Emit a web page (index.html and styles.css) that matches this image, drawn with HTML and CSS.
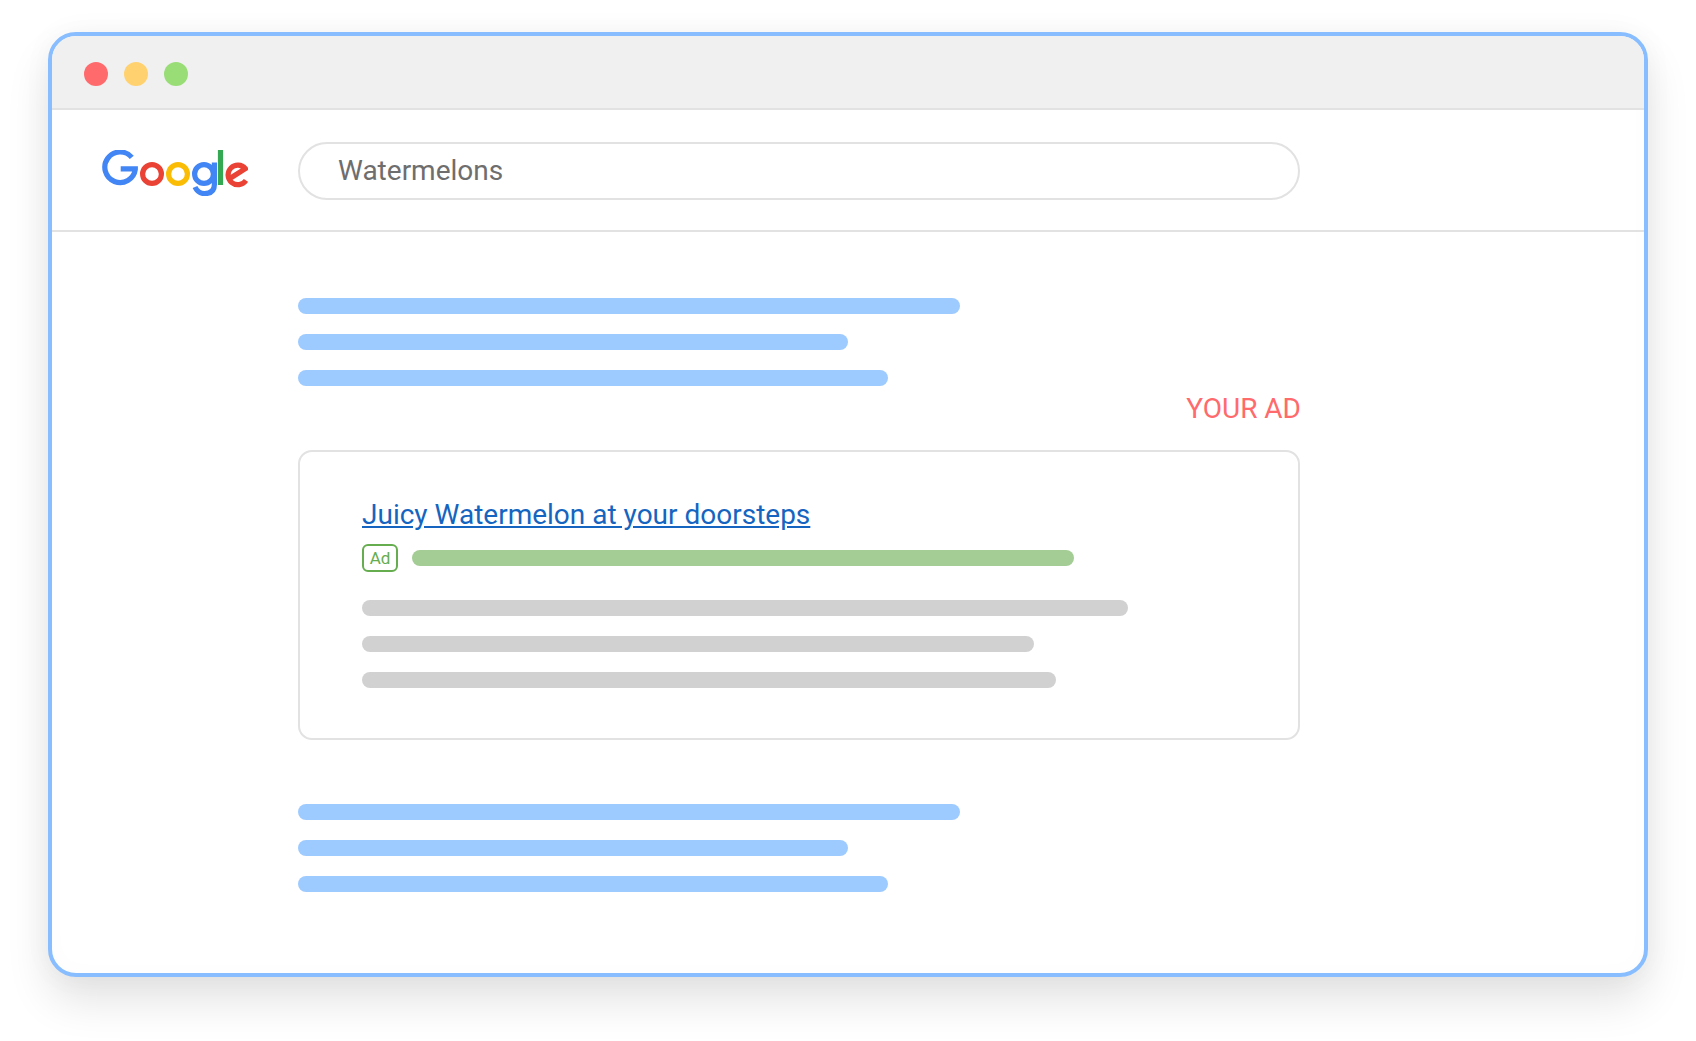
FILE: index.html
```html
<!DOCTYPE html>
<html lang="en">
<head>
<meta charset="utf-8">
<title>Google ad preview</title>
<link rel="stylesheet" href="styles.css">
</head>
<body>
<div class="window">
  <div class="titlebar">
    <span class="dot dot-red"></span>
    <span class="dot dot-yellow"></span>
    <span class="dot dot-green"></span>
  </div>
  <header class="header">
    <svg class="logo" viewBox="0 0 146 46" width="146" height="46" role="img" aria-label="Google">
      <g fill="none" stroke-width="5.2">
        <path stroke="#4285f4" d="M29.8 7.4A15.3 15.3 0 1 0 33.3 19.4V18.9H18.7"/>
        <circle stroke="#ea4335" cx="50" cy="24" r="9.4"/>
        <circle stroke="#fbbc05" cx="76" cy="24" r="9.4"/>
        <circle stroke="#4285f4" cx="102" cy="24" r="9.4"/>
        <path stroke="#4285f4" d="M112.4 12.5V34.5C112.4 41.5 108 43.6 102.6 43.6C98 43.6 94.8 41 93 37"/>
        <path stroke="#34a853" d="M118.5 0V35"/>
        <path stroke="#ea4335" d="M144 30.4A9.8 9.8 0 1 1 143.4 18.6L129 27.8"/>
      </g>
    </svg>
    <div class="search">Watermelons</div>
  </header>
  <main class="results">
    <div class="bars">
      <div class="bar bar-blue bar-w1"></div>
      <div class="bar bar-blue bar-w2"></div>
      <div class="bar bar-blue bar-w3"></div>
    </div>
    <div class="ad-label">YOUR AD</div>
    <section class="ad-card">
      <a class="ad-title" href="#">Juicy Watermelon at your doorsteps</a>
      <div class="ad-url">
        <span class="ad-badge">Ad</span>
        <div class="bar bar-green"></div>
      </div>
      <div class="bars">
        <div class="bar bar-gray bar-g1"></div>
        <div class="bar bar-gray bar-g2"></div>
        <div class="bar bar-gray bar-g3"></div>
      </div>
    </section>
    <div class="bars bars-lower">
      <div class="bar bar-blue bar-w1"></div>
      <div class="bar bar-blue bar-w2"></div>
      <div class="bar bar-blue bar-w3"></div>
    </div>
  </main>
</div>
</body>
</html>
```
FILE: styles.css
```css
* { box-sizing: border-box; }
html, body { margin: 0; height: 100%; background: #fff; }
body {
  padding: 32px 48px 64px;
  font-family: Roboto, "Liberation Sans", sans-serif;
  overflow: hidden;
}
.window {
  width: 1600px;
  height: 945px;
  background: #fff;
  border: 4px solid #88bdff;
  border-radius: 28px;
  box-shadow: 0 24px 44px rgba(0, 0, 0, 0.11), 0 0 30px rgba(0, 0, 0, 0.04), inset 0 0 24px rgba(0, 0, 0, 0.015);
  overflow: hidden;
}
.titlebar {
  height: 74px;
  padding: 26px 0 0 32px;
  display: flex;
  gap: 16px;
  background: #f0f0f0;
  border-bottom: 2px solid #e2e2e2;
}
.dot { width: 24px; height: 24px; border-radius: 50%; }
.dot-red { background: #ff6a6d; }
.dot-yellow { background: #ffd16f; }
.dot-green { background: #99dd77; }
.header {
  height: 122px;
  padding: 32px 0 30px 50px;
  display: flex;
  align-items: flex-start;
  gap: 50px;
  border-bottom: 2px solid #e2e2e2;
}
.logo { margin-top: 8px; flex: none; }
.search {
  width: 1002px;
  height: 58px;
  padding-left: 38px;
  border: 2px solid #e2e2e2;
  border-radius: 29px;
  font-size: 28px;
  line-height: 54px;
  color: #6e6e6e;
}
.results {
  width: 1248px;
  padding: 66px 0 0 246px;
}
.bars { display: flex; flex-direction: column; gap: 20px; }
.bar { height: 16px; border-radius: 8px; }
.bar-blue { background: #9ecbff; }
.bar-gray { background: #d1d1d1; }
.bar-green { background: #a3cd94; width: 662px; }
.bar-w1 { width: 662px; }
.bar-w2 { width: 550px; }
.bar-w3 { width: 590px; }
.bar-g1 { width: 766px; }
.bar-g2 { width: 672px; }
.bar-g3 { width: 694px; }
.ad-label {
  height: 64px;
  padding-top: 3px;
  padding-right: 0;
  margin-right: -1px;
  text-align: right;
  font-size: 28px;
  line-height: 40px;
  color: #ff6a6d;
}
.ad-card {
  height: 290px;
  padding: 45px 0 0 62px;
  border: 2px solid #e2e2e2;
  border-radius: 14px;
}
.ad-title {
  display: block;
  font-size: 28px;
  line-height: 36px;
  color: #1565c0;
}
.ad-url {
  margin-top: 11px;
  margin-bottom: 28px;
  display: flex;
  align-items: center;
  gap: 14px;
}
.ad-badge {
  width: 36px;
  height: 28px;
  border: 2px solid #66ad4f;
  border-radius: 6px;
  font-size: 17px;
  line-height: 25px;
  text-align: center;
  color: #66ad4f;
}
.bars-lower { margin-top: 64px; }
```
